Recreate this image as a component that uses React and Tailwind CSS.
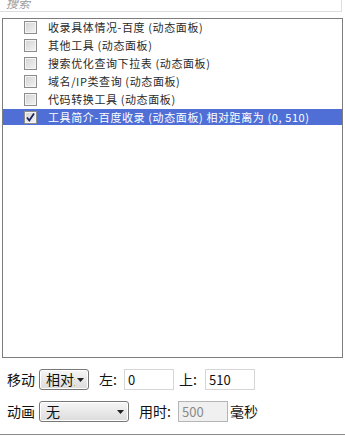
import React from "react";

const items = [
  { label: "收录具体情况-百度 (动态面板)", checked: false },
  { label: "其他工具 (动态面板)", checked: false },
  { label: "搜索优化查询下拉表 (动态面板)", checked: false },
  { label: "域名/IP类查询 (动态面板)", checked: false },
  { label: "代码转换工具 (动态面板)", checked: false },
  { label: "工具简介-百度收录 (动态面板) 相对距离为 (0, 510)", checked: true, selected: true },
];

function Check({ checked }) {
  return (
    <div className="w-[13px] h-[13px] shrink-0 border border-[#8c8c8c] bg-gradient-to-br from-[#d2d2d2] to-[#f4f4f4] flex items-center justify-center shadow-[inset_0_0_0_1px_#f4f4f4]">
      {checked && (
        <svg width="11" height="11" viewBox="0 0 11 11">
          <path d="M2 5.5 L4.3 8.5 L9 1.5" fill="none" stroke="#1c2466" strokeWidth="1.8" />
        </svg>
      )}
    </div>
  );
}

function Arrow() {
  return (
    <svg width="7" height="4" viewBox="0 0 7 4" className="shrink-0">
      <path d="M0 0 H7 L3.5 4 Z" fill="#222" />
    </svg>
  );
}

function Select({ width, children }) {
  return (
    <div
      className="h-[21px] rounded-[3px] border border-[#777] bg-gradient-to-b from-[#f6f6f6] to-[#dcdcdc] flex items-center pl-[6px] pr-[4px] shadow-[inset_0_0_0_1px_#fff]"
      style={{ width }}
    >
      <div className="flex-1 h-[19px] overflow-hidden whitespace-nowrap text-[14px] leading-[19px] text-[#111]">{children}</div>
      <div className="pl-[2px]"><Arrow /></div>
    </div>
  );
}

function Input({ value, width, disabled }) {
  return (
    <div
      className={
        "h-[21px] border flex items-end pb-[1px] pl-[3px] text-[13px] leading-[16px] " +
        (disabled ? "border-[#b5b5b5] bg-[#f0f0f0] text-[#8a8a8a]" : "border-[#d6d6d6] bg-white text-[#111]")
      }
      style={{ width }}
    >
      {value}
    </div>
  );
}

export default function App() {
  return (
    <div
      className="w-[345px] h-[436px] bg-white overflow-hidden text-[#222]"
      style={{ fontFamily: '"Noto Sans CJK SC", "Liberation Sans", sans-serif' }}
    >
      <div className="ml-[-1px] mt-[-10px] w-[343px] h-[22px] border border-[#dcdde0] flex items-end pl-[6px] pb-[1px]">
        <span className="italic text-[12px] leading-[14px] text-[#9a9a9a]">搜索</span>
      </div>
      <div className="mt-[6px] ml-[2px] w-[341px] h-[340px] border border-[#7d7d7d]">
        {items.map((it, i) => (
          <div
            key={i}
            className={
              "h-[16px] mb-[2px] flex items-center pl-[21px] gap-[11px] text-[11px] leading-[16px] whitespace-nowrap " +
              (it.selected ? "bg-[#4f6fd6] text-white" : "text-[#2a2a2a]")
            }
          >
            <Check checked={it.checked} />
            <span className="tracking-[0.6px]">{it.label}</span>
          </div>
        ))}
      </div>
      <div className="mt-[11px] ml-[7px] flex items-center h-[21px] text-[14px] text-[#111]">
        <span className="w-[32px]">移动</span>
        <Select width={50}>相对坐</Select>
        <span className="ml-[10px] w-[25px]">左:</span>
        <Input value="0" width={50} />
        <span className="ml-[5px] w-[26px]">上:</span>
        <Input value="510" width={50} />
      </div>
      <div className="mt-[11px] ml-[7px] flex items-center h-[21px] text-[14px] text-[#111]">
        <span className="w-[32px]">动画</span>
        <Select width={90}>无</Select>
        <span className="ml-[10px] w-[39px]">用时:</span>
        <Input value="500" width={50} disabled />
        <span className="ml-[2px]">毫秒</span>
      </div>
      <div className="mt-[12px] h-px bg-[#8a8a8a]" />
    </div>
  );
}
